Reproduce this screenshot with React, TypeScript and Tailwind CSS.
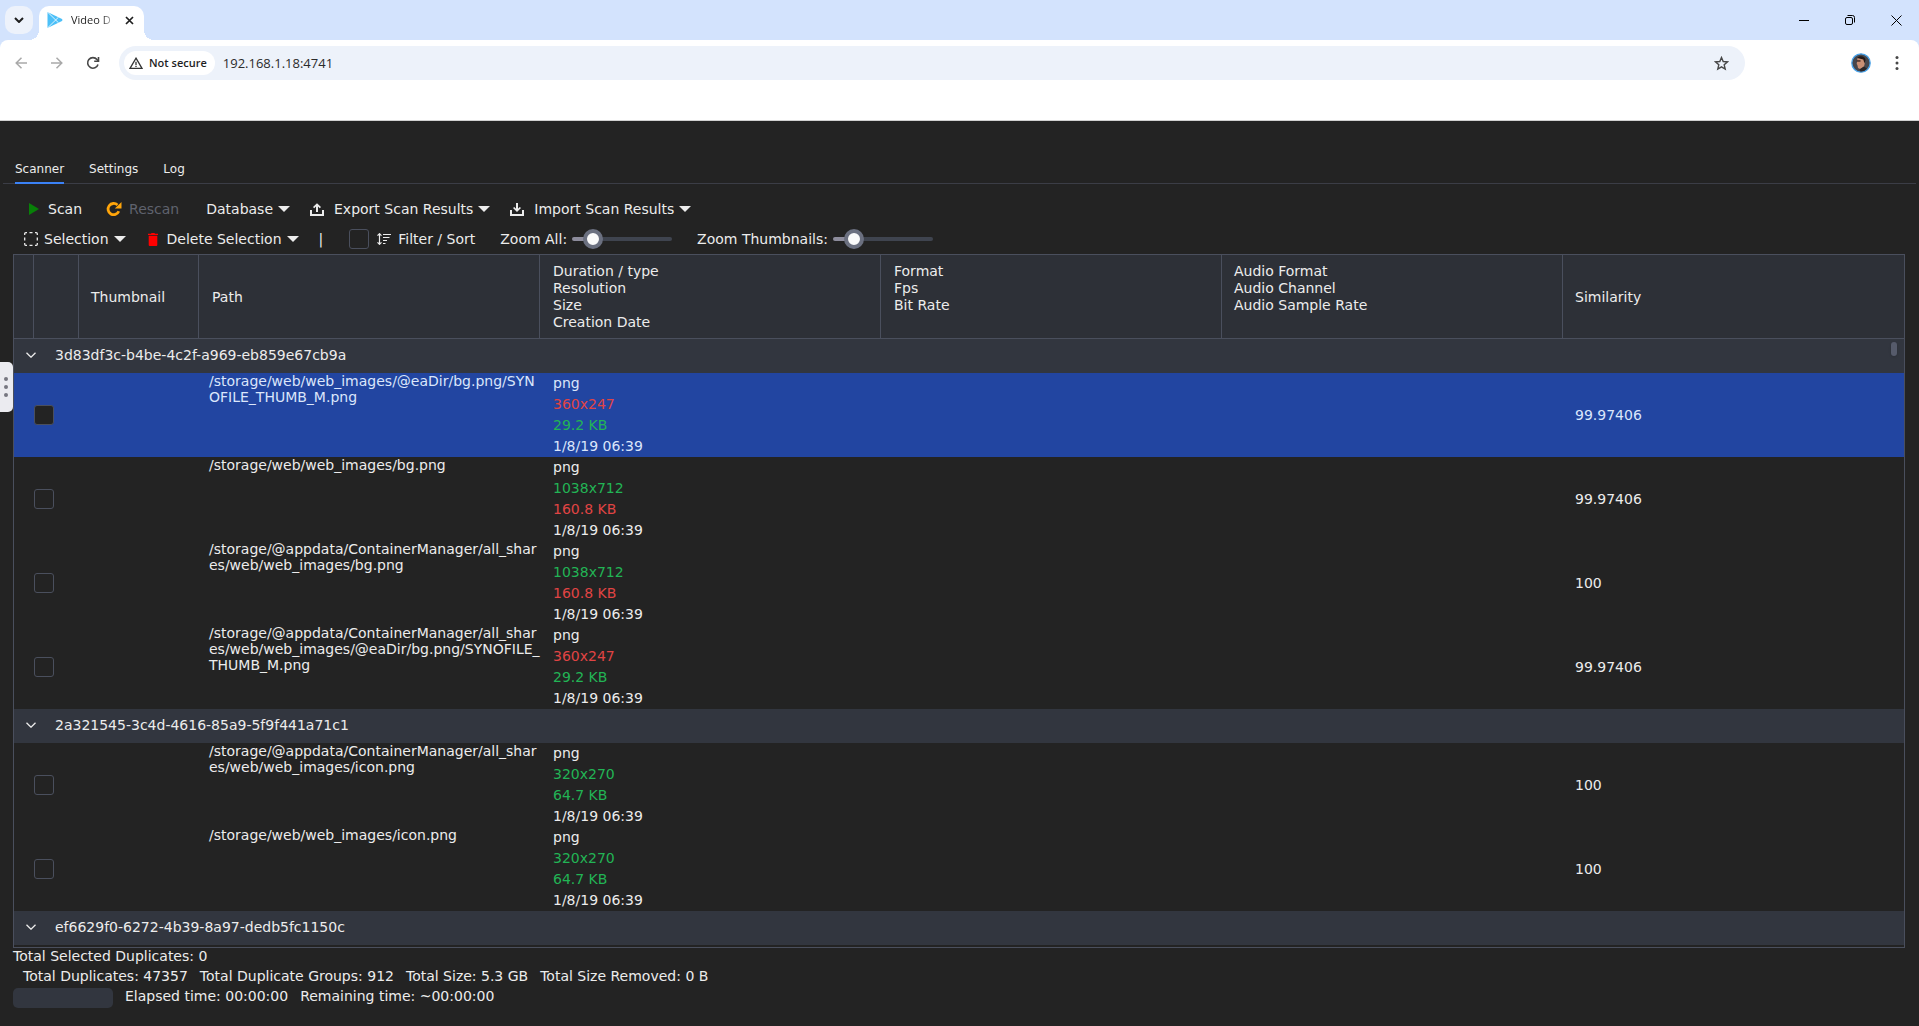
import React from "react";

type Tone = "good" | "bad";

interface FileItem {
  path: string;
  type: string;
  resolution: string;
  resolutionTone: Tone;
  size: string;
  sizeTone: Tone;
  date: string;
  similarity: string;
  selected?: boolean;
}

interface Group {
  id: string;
  items: FileItem[];
}

const groups: Group[] = [
  {
    id: "3d83df3c-b4be-4c2f-a969-eb859e67cb9a",
    items: [
      { path: "/storage/web/web_images/@eaDir/bg.png/SYNOFILE_THUMB_M.png", type: "png", resolution: "360x247", resolutionTone: "bad", size: "29.2 KB", sizeTone: "good", date: "1/8/19 06:39", similarity: "99.97406", selected: true },
      { path: "/storage/web/web_images/bg.png", type: "png", resolution: "1038x712", resolutionTone: "good", size: "160.8 KB", sizeTone: "bad", date: "1/8/19 06:39", similarity: "99.97406" },
      { path: "/storage/@appdata/ContainerManager/all_shares/web/web_images/bg.png", type: "png", resolution: "1038x712", resolutionTone: "good", size: "160.8 KB", sizeTone: "bad", date: "1/8/19 06:39", similarity: "100" },
      { path: "/storage/@appdata/ContainerManager/all_shares/web/web_images/@eaDir/bg.png/SYNOFILE_THUMB_M.png", type: "png", resolution: "360x247", resolutionTone: "bad", size: "29.2 KB", sizeTone: "good", date: "1/8/19 06:39", similarity: "99.97406" },
    ],
  },
  {
    id: "2a321545-3c4d-4616-85a9-5f9f441a71c1",
    items: [
      { path: "/storage/@appdata/ContainerManager/all_shares/web/web_images/icon.png", type: "png", resolution: "320x270", resolutionTone: "good", size: "64.7 KB", sizeTone: "good", date: "1/8/19 06:39", similarity: "100" },
      { path: "/storage/web/web_images/icon.png", type: "png", resolution: "320x270", resolutionTone: "good", size: "64.7 KB", sizeTone: "good", date: "1/8/19 06:39", similarity: "100" },
    ],
  },
  { id: "ef6629f0-6272-4b39-8a97-dedb5fc1150c", items: [] },
];

const toneClass: Record<Tone, string> = {
  good: "text-[#22b455]",
  bad: "text-[#e04444]",
};

function BrowserTabs() {
  return (
    <div className="flex h-10 items-end bg-[#d3e3fd]">
      <button aria-label="Search tabs" className="mb-1.5 ml-[5px] flex size-7 items-center justify-center rounded-[10px] bg-[#edf2fb]">
        <svg width="10" height="6" viewBox="0 0 10 6" fill="none" stroke="#1f1f1f" strokeWidth="2">
          <path d="M1 1l4 4 4-4" />
        </svg>
      </button>
      <div className="relative ml-1.5 flex h-[34px] w-[105px] items-center rounded-t-[10px] bg-white pb-1.5 pl-2">
        <span className="absolute -left-2.5 bottom-0 size-2.5 bg-[radial-gradient(circle_at_0_0,transparent_10px,white_10px)]" />
        <span className="absolute -right-2.5 bottom-0 size-2.5 bg-[radial-gradient(circle_at_100%_0,transparent_10px,white_10px)]" />
        <svg width="16" height="16" viewBox="0 0 16 16">
          <path d="M.5 0L15 7q1 1 0 2L.5 16z" fill="#4cc0f8" />
          <path d="M.5 0l11 10.800M.5 16l11-10.800" stroke="#fff" strokeWidth=".8" />
        </svg>
        <span className="ml-2 w-11 bg-gradient-to-r from-[#1f1f1f] from-70% to-white bg-clip-text font-['Open_Sans',sans-serif] text-[11px] whitespace-nowrap text-transparent">
          Video D
        </span>
        <button aria-label="Close tab" className="ml-1.5 flex size-4 items-center justify-center">
          <svg width="9" height="9" viewBox="0 0 9 9" stroke="#1f1f1f" strokeWidth="1.700">
            <path d="M1 1l7 7M8 1L1 8" />
          </svg>
        </button>
      </div>
      <div className="ml-auto flex h-10 text-black">
        <button aria-label="Minimize" className="flex w-[46px] items-center justify-center">
          <svg width="10" height="10" viewBox="0 0 10 10" stroke="currentColor"><path d="M0 5.500h10" /></svg>
        </button>
        <button aria-label="Restore" className="flex w-[46px] items-center justify-center">
          <svg width="10" height="10" viewBox="0 0 10 10" fill="none" stroke="currentColor">
            <rect x=".5" y="2.500" width="7" height="7" rx="1.500" />
            <path d="M2.500.5h5a2 2 0 0 1 2 2v5" />
          </svg>
        </button>
        <button aria-label="Close" className="flex w-[46px] items-center justify-center">
          <svg width="11" height="11" viewBox="0 0 11 11" stroke="currentColor"><path d="M.5.5l10 10M10.500.5l-10 10" /></svg>
        </button>
      </div>
    </div>
  );
}

function AddressBar() {
  return (
    <div className="bg-[#d3e3fd]">
      <div className="flex h-20 items-start rounded-t-[8px] bg-white pt-1.5 pr-1 pl-[3px]">
        <button aria-label="Back" className="flex h-[34px] w-9 items-center justify-center">
          <svg width="12" height="12" viewBox="0 0 12 12" fill="none" stroke="#a9a9a9" strokeWidth="1.500"><path d="M12 6H1M6.500.7L1.200 6l5.300 5.300" /></svg>
        </button>
        <button aria-label="Forward" className="flex h-[34px] w-9 items-center justify-center">
          <svg width="12" height="12" viewBox="0 0 12 12" fill="none" stroke="#a9a9a9" strokeWidth="1.500"><path d="M0 6h11M5.500.7L10.800 6l-5.300 5.300" /></svg>
        </button>
        <button aria-label="Reload" className="flex h-[34px] w-9 items-center justify-center">
          <svg width="14" height="14" viewBox="0 0 14 14" fill="none" stroke="#474747" strokeWidth="1.600">
            <path d="M12 8.500A5.300 5.300 0 1 1 11 3.500L12.500 5" />
            <path d="M12.500 1v4.300H8.200" />
          </svg>
        </button>
        <div className="ml-2 flex h-[34px] flex-1 items-center rounded-full bg-[#edf2fa] pl-[5px] font-['Open_Sans',sans-serif]">
          <button className="flex h-6 items-center rounded-full bg-white pr-2 pl-[5px] text-[11px] font-semibold text-[#1f1f1f]">
            <svg className="mr-1.5" width="14" height="12" viewBox="0 0 14 12" fill="none" stroke="#333" strokeWidth="1.300">
              <path d="M7 1.200L13 11.300H1z" />
              <path d="M7 4.800v3.200M7 8.800v1.300" />
            </svg>
            Not secure
          </button>
          <input aria-label="Address" readOnly defaultValue="192.168.1.18:4741" className="ml-2 min-w-0 flex-1 bg-transparent text-[13px] text-[#2b2b2b] outline-none" />
          <button aria-label="Bookmark" className="mr-4 flex size-4 items-center justify-center">
            <svg width="15" height="15" viewBox="0 0 15 15" fill="none" stroke="#474747" strokeWidth="1.400">
              <path d="M7.500 1.500l1.700 4 4.300.4-3.300 2.900 1 4.200-3.700-2.200L3.800 13l1-4.200L1.500 5.900l4.300-.4z" />
            </svg>
          </button>
        </div>
        <button aria-label="Profile" className="ml-[98px] flex h-[34px] w-9 items-center justify-center">
          <svg width="20" height="20" viewBox="0 0 20 20">
            <circle cx="10" cy="10" r="9.200" fill="#46464c" stroke="#4aa3ea" strokeWidth="1.300" />
            <path d="M6.500 5l6.500-.5 1 5-1 4-4 2.500-2-1-.6-3-.7-1z" fill="#c98f74" />
            <path d="M6.300 5C7.500 2.500 14.500 2.200 14.500 7l-1 3.500-1.200-4z" fill="#241a18" />
            <path d="M5.800 7.300h3.700v1.300H5.800z" fill="#33201e" />
            <path d="M8.500 16.500l4.500-3 3 2.300a8.600 8.600 0 0 1-6.500 2.700z" fill="#2a2527" />
          </svg>
        </button>
        <button aria-label="Menu" className="flex h-[34px] w-9 items-center justify-center">
          <svg width="4" height="14" viewBox="0 0 4 14" fill="#474747">
            <circle cx="2" cy="1.600" r="1.500" /><circle cx="2" cy="7" r="1.500" /><circle cx="2" cy="12.400" r="1.500" />
          </svg>
        </button>
      </div>
    </div>
  );
}

function Caret() {
  return (
    <svg className="ml-[5px]" width="12" height="6" viewBox="0 0 12 6" fill="currentColor"><path d="M0 0h12L6 6z" /></svg>
  );
}

function ZoomSlider({ id, label }: { id: string; label: string }) {
  return (
    <div className="flex items-center gap-[5px]">
      <label htmlFor={id}>{label}</label>
      <input
        id={id}
        type="range"
        min={0}
        max={100}
        defaultValue={14}
        className="h-1 w-[100px] appearance-none rounded-full bg-[linear-gradient(to_right,#8d8c9c_20%,#3f444f_20%)] [&::-webkit-slider-thumb]:size-5 [&::-webkit-slider-thumb]:appearance-none [&::-webkit-slider-thumb]:rounded-full [&::-webkit-slider-thumb]:border-4 [&::-webkit-slider-thumb]:border-[#6b7080] [&::-webkit-slider-thumb]:bg-[#fafafa]"
      />
    </div>
  );
}

const boxClass = "block size-5 appearance-none rounded-[3px] border border-[#4a4f5d] bg-[#232323]";

function Toolbar() {
  return (
    <div className="pl-6 whitespace-nowrap">
      <div className="flex h-[30px] items-center">
        <button className="flex items-center">
          <svg className="ml-[5px]" width="10" height="12" viewBox="0 0 10 12" fill="#088008"><path d="M0 0l10 6-10 6z" /></svg>
          <span className="ml-[9px]">Scan</span>
        </button>
        <button disabled className="ml-6 flex items-center text-[#5f626d]">
          <svg width="16" height="16" viewBox="0 0 16 16" fill="none" stroke="#ffa50a" strokeWidth="2.800">
            <path d="M12.800 10.300A5.600 5.600 0 1 1 11.500 4" />
            <path d="M15.500 1v6.500H8.800z" fill="#ffa50a" stroke="none" />
          </svg>
          <span className="ml-[7px]">Rescan</span>
        </button>
        <button className="ml-[27px] flex items-center">Database<Caret /></button>
        <button className="ml-5 flex items-center">
          <svg width="14" height="13" viewBox="0 0 14 13" fill="none" stroke="currentColor" strokeWidth="2">
            <path d="M1 7v5h12V7M7 9V2" />
            <path d="M3.600 4.700L7 1.400l3.400 3.300" strokeWidth="1.700" />
          </svg>
          <span className="ml-2.5">Export Scan Results</span><Caret />
        </button>
        <button className="ml-5 flex items-center">
          <svg width="14" height="13" viewBox="0 0 14 13" fill="none" stroke="currentColor" strokeWidth="2">
            <path d="M1 7v5h12V7M7 0v7" />
            <path d="M3.600 4.500L7 7.800l3.400-3.300" strokeWidth="1.700" />
          </svg>
          <span className="ml-2.5">Import Scan Results</span><Caret />
        </button>
      </div>
      <div className="flex h-[30px] items-center">
        <button className="flex items-center">
          <svg width="14" height="14" viewBox="0 0 14 14" fill="none" stroke="currentColor" strokeWidth="1.300">
            <path d="M.7 3V1.700a1 1 0 0 1 1-1H3M11 .7h1.300a1 1 0 0 1 1 1V3M13.300 11v1.300a1 1 0 0 1-1 1H11M3 13.300H1.700a1 1 0 0 1-1-1V11M5.500.7h3M5.500 13.300h3M.7 5.500v3M13.300 5.500v3" />
          </svg>
          <span className="ml-1.5">Selection</span><Caret />
        </button>
        <button className="ml-[22px] flex items-center">
          <svg width="10" height="13" viewBox="0 0 10 13" fill="#ff0000"><path d="M0 .7h3L3.500 0h3l.5.700h3V2H0zM.7 2.800h8.600V12q0 1-1 1H1.700q-1 0-1-1z" /></svg>
          <span className="ml-[9px]">Delete Selection</span><Caret />
        </button>
        <span className="ml-5">|</span>
        <label className="ml-[26px] flex items-center">
          <input type="checkbox" className={boxClass} />
          <svg className="ml-2" width="14" height="12" viewBox="0 0 14 12" fill="none" stroke="currentColor" strokeWidth="1.200">
            <path d="M2.500 1v10M.5 2.700l2-2 2 2M.5 9.300l2 2 2-2M6 1.500h8M6 4.500h6.500M6 7.500h4M6 10.500h2.500" />
          </svg>
          <span className="ml-[7px]">Filter / Sort</span>
        </label>
        <div className="ml-[25px] flex gap-[25px]">
          <ZoomSlider id="zoom-all" label="Zoom All:" />
          <ZoomSlider id="zoom-thumbnails" label="Zoom Thumbnails:" />
        </div>
      </div>
    </div>
  );
}

const thClass = "border-r border-b border-[#4a4f5d] text-left font-normal last:border-r-0";

function ResultsTable() {
  return (
    <div className="relative mr-3.5 ml-[13px] border border-[#4a4f5d] pb-0.5">
      <table className="w-full table-fixed border-separate border-spacing-0">
        <colgroup>
          <col className="w-5" />
          <col className="w-[45px]" />
          <col className="w-[120px]" />
          <col /><col /><col /><col /><col />
        </colgroup>
        <thead className="bg-[#2d3037] leading-[17px]">
          <tr className="h-[84px]">
            <th className={thClass} />
            <th className={thClass} />
            <th className={thClass + " pt-0.5 pl-3"}>Thumbnail</th>
            <th className={thClass + " pt-0.5 pl-[13px]"}>Path</th>
            <th className={thClass + " pl-[13px]"}>Duration / type<br />Resolution<br />Size<br />Creation Date</th>
            <th className={thClass + " pt-2 pl-[13px] align-top"}>Format<br />Fps<br />Bit Rate</th>
            <th className={thClass + " pt-2 pl-3 align-top"}>Audio Format<br />Audio Channel<br />Audio Sample Rate</th>
            <th className={thClass + " pt-0.5 pl-3"}>Similarity</th>
          </tr>
        </thead>
        <tbody>
          {groups.map((group) => (
            <React.Fragment key={group.id}>
              <tr className="h-[34px] bg-[#32363f]">
                <td colSpan={8} className="pb-0.5 pl-3">
                  <button aria-expanded="true" className="flex items-center gap-[19px]">
                    <svg width="10" height="6" viewBox="0 0 10 6" fill="none" stroke="currentColor" strokeWidth="1.300"><path d="M.5.7L5 5.200 9.500.7" /></svg>
                    {group.id}
                  </button>
                </td>
              </tr>
              {group.items.map((item) => (
                <tr key={item.path} className={item.selected ? "bg-[#2245a1] text-[#dbe6fb]" : ""}>
                  <td />
                  <td><input type="checkbox" aria-label={item.path} className={boxClass} /></td>
                  <td />
                  <td className="pl-2.5 align-top leading-4 break-all">{item.path}</td>
                  <td className="pl-[13px] leading-[21px]">
                    <div>{item.type}</div>
                    <div className={toneClass[item.resolutionTone]}>{item.resolution}</div>
                    <div className={toneClass[item.sizeTone]}>{item.size}</div>
                    <div>{item.date}</div>
                  </td>
                  <td />
                  <td />
                  <td className="pl-3">{item.similarity}</td>
                </tr>
              ))}
            </React.Fragment>
          ))}
        </tbody>
      </table>
      <div className="absolute top-[87px] right-[7px] h-3.5 w-1.5 rounded-full bg-[#565b6b] shadow" />
    </div>
  );
}

function StatusBar() {
  return (
    <footer className="ml-[13px] whitespace-nowrap">
      <div className="pb-0.5 leading-4">Total Selected Duplicates: 0</div>
      <div className="flex gap-3 pl-2.5 leading-5">
        <span>Total Duplicates: 47357</span>
        <span>Total Duplicate Groups: 912</span>
        <span>Total Size: 5.3 GB</span>
        <span>Total Size Removed: 0 B</span>
      </div>
      <div className="flex gap-3 leading-5">
        <div role="progressbar" aria-label="Scan progress" className="mt-0.5 h-5 w-[100px] rounded-[5px] bg-[#32363f]" />
        <span>Elapsed time: 00:00:00</span>
        <span>Remaining time: ~00:00:00</span>
      </div>
    </footer>
  );
}

export default function App() {
  return (
    <div className="relative flex min-h-screen flex-col bg-[#232323] font-['DejaVu_Sans',sans-serif] text-sm text-[#ececec]">
      <BrowserTabs />
      <AddressBar />
      <main className="border-t border-[#d0d0d0]">
        <nav className="mx-[3px] flex gap-[25px] border-b border-[#3b3d46] pt-[37px] pl-3 text-xs">
          <button className="-mb-px h-[26px] border-b-2 border-[#3b82f6] pb-0.5">Scanner</button>
          <button className="-mb-px h-[26px] border-b-2 border-transparent pb-0.5">Settings</button>
          <button className="-mb-px h-[26px] border-b-2 border-transparent pb-0.5">Log</button>
        </nav>
        <div className="pt-2.5">
          <Toolbar />
        </div>
        <ResultsTable />
        <StatusBar />
      </main>
      <button aria-label="Open side panel" className="absolute top-[362px] left-0 flex h-[50px] w-[13px] flex-col items-center justify-center gap-1 rounded-r-[5px] bg-[#ebebf0] pr-0.5">
        <span className="size-1 rounded-full bg-[#767680]" />
        <span className="size-1 rounded-full bg-[#767680]" />
        <span className="size-1 rounded-full bg-[#767680]" />
      </button>
    </div>
  );
}
